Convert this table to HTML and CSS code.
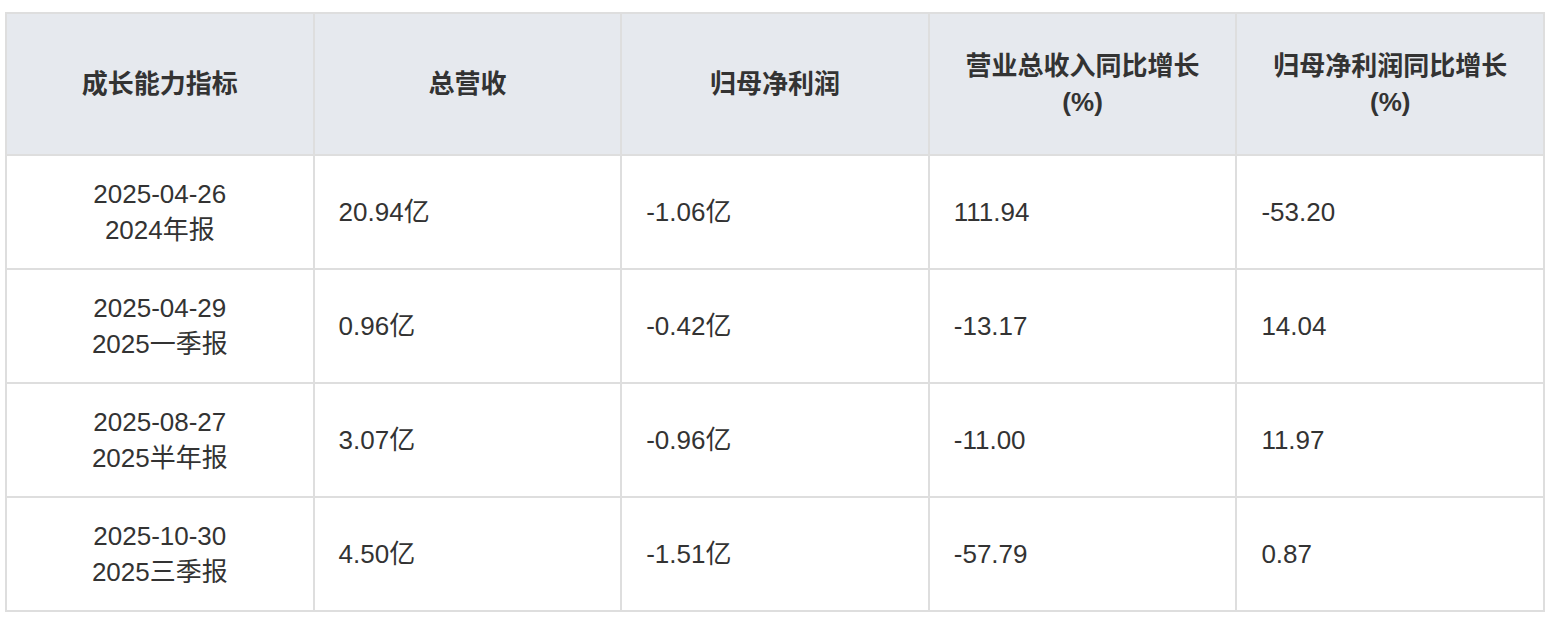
FILE: index.html
```html
<!DOCTYPE html>
<html lang="zh-CN">
<head>
<meta charset="utf-8">
<title>成长能力指标</title>
<link rel="stylesheet" href="styles.css">
</head>
<body>
<table class="grid">
  <colgroup>
    <col class="c"><col class="c"><col class="c"><col class="c"><col class="c">
  </colgroup>
  <thead>
    <tr>
      <th>成长能力指标</th>
      <th>总营收</th>
      <th>归母净利润</th>
      <th>营业总收入同比增长<br>(%)</th>
      <th>归母净利润同比增长<br>(%)</th>
    </tr>
  </thead>
  <tbody>
    <tr>
      <td class="date">2025-04-26<br>2024年报</td>
      <td>20.94亿</td>
      <td>-1.06亿</td>
      <td>111.94</td>
      <td>-53.20</td>
    </tr>
    <tr>
      <td class="date">2025-04-29<br>2025一季报</td>
      <td>0.96亿</td>
      <td>-0.42亿</td>
      <td>-13.17</td>
      <td>14.04</td>
    </tr>
    <tr>
      <td class="date">2025-08-27<br>2025半年报</td>
      <td>3.07亿</td>
      <td>-0.96亿</td>
      <td>-11.00</td>
      <td>11.97</td>
    </tr>
    <tr>
      <td class="date">2025-10-30<br>2025三季报</td>
      <td>4.50亿</td>
      <td>-1.51亿</td>
      <td>-57.79</td>
      <td>0.87</td>
    </tr>
  </tbody>
</table>
</body>
</html>
```

FILE: styles.css
```css
html, body {
  margin: 0;
  background: #ffffff;
}
body {
  padding: 12px 7px 0 5px;
  font-family: "Liberation Sans", "Noto Sans CJK SC", sans-serif;
  color: #333333;
}
.grid {
  width: 1540px;
  table-layout: fixed;
  border-collapse: separate;
  border-spacing: 0;
  border-left: 2px solid #dedede;
  border-top: 2px solid #dedede;
}
.grid th,
.grid td {
  border-right: 2px solid #dedede;
  border-bottom: 2px solid #dedede;
  font-size: 26px;
  line-height: 36px;
  vertical-align: middle;
}
.grid th {
  background: #e6e9ee;
  font-weight: 700;
  text-align: center;
  height: 142px;
  padding: 0 12px;
  box-sizing: border-box;
  color: #333333;
}
.grid td {
  height: 112px;
  padding: 0 24px;
  text-align: left;
  color: #333333;
}
.grid td.date {
  text-align: center;
  padding: 0 12px;
}
```
